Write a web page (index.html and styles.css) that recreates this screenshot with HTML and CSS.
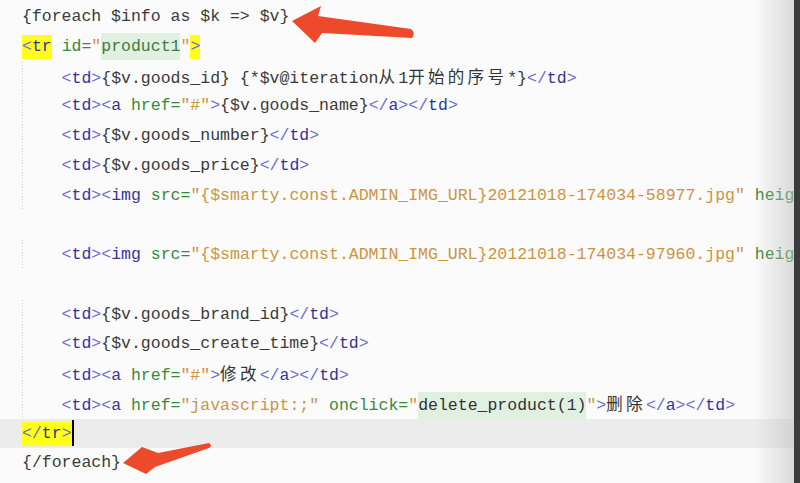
FILE: index.html
```
<!DOCTYPE html>
<html lang="zh-CN">
<head>
    <meta charset="UTF-8">
    <meta name="viewport" content="width=device-width, initial-scale=1.0">
    <title>foreach</title>
    <link rel="stylesheet" href="styles.css">
</head>
<body>
    <div class="editor">
        <div class="code">
            <div class="line">{foreach $info as $k =&gt; $v}</div>
            <div class="line"><span class="hl-y"><span class="br">&lt;</span><span class="tn">tr</span></span> <span class="at">id=</span><span class="st">"</span><span class="hl-g at">product1</span><span class="st">"</span><span class="hl-y br">&gt;</span></div>
            <div class="line ind">    <span class="br">&lt;</span><span class="tn">td</span><span class="br">&gt;</span>{$v.goods_id} {*$v@iteration<span class="zh">从</span>1<span class="zh">开始的序号</span>*}<span class="br">&lt;/</span><span class="tn">td</span><span class="br">&gt;</span></div>
            <div class="line ind">    <span class="br">&lt;</span><span class="tn">td</span><span class="br">&gt;&lt;</span><span class="tn">a</span> <span class="at">href=</span><span class="st">"#"</span><span class="br">&gt;</span>{$v.goods_name}<span class="br">&lt;/</span><span class="tn">a</span><span class="br">&gt;&lt;/</span><span class="tn">td</span><span class="br">&gt;</span></div>
            <div class="line ind">    <span class="br">&lt;</span><span class="tn">td</span><span class="br">&gt;</span>{$v.goods_number}<span class="br">&lt;/</span><span class="tn">td</span><span class="br">&gt;</span></div>
            <div class="line ind">    <span class="br">&lt;</span><span class="tn">td</span><span class="br">&gt;</span>{$v.goods_price}<span class="br">&lt;/</span><span class="tn">td</span><span class="br">&gt;</span></div>
            <div class="line ind">    <span class="br">&lt;</span><span class="tn">td</span><span class="br">&gt;&lt;</span><span class="tn">img</span> <span class="at">src=</span><span class="st">"{$smarty.const.ADMIN_IMG_URL}20121018-174034-58977.jpg"</span> <span class="at">height=</span><span class="st">"60"</span><span class="br">/&gt;</span></div>
            <div class="line"> </div>
            <div class="line ind">    <span class="br">&lt;</span><span class="tn">td</span><span class="br">&gt;&lt;</span><span class="tn">img</span> <span class="at">src=</span><span class="st">"{$smarty.const.ADMIN_IMG_URL}20121018-174034-97960.jpg"</span> <span class="at">height=</span><span class="st">"60"</span><span class="br">/&gt;</span></div>
            <div class="line"> </div>
            <div class="line ind">    <span class="br">&lt;</span><span class="tn">td</span><span class="br">&gt;</span>{$v.goods_brand_id}<span class="br">&lt;/</span><span class="tn">td</span><span class="br">&gt;</span></div>
            <div class="line ind">    <span class="br">&lt;</span><span class="tn">td</span><span class="br">&gt;</span>{$v.goods_create_time}<span class="br">&lt;/</span><span class="tn">td</span><span class="br">&gt;</span></div>
            <div class="line ind">    <span class="br">&lt;</span><span class="tn">td</span><span class="br">&gt;&lt;</span><span class="tn">a</span> <span class="at">href=</span><span class="st">"#"</span><span class="br">&gt;</span><span class="zh">修改</span><span class="br">&lt;/</span><span class="tn">a</span><span class="br">&gt;&lt;/</span><span class="tn">td</span><span class="br">&gt;</span></div>
            <div class="line ind">    <span class="br">&lt;</span><span class="tn">td</span><span class="br">&gt;&lt;</span><span class="tn">a</span> <span class="at">href=</span><span class="st">"javascript:;"</span> <span class="at">onclick=</span><span class="st">"</span><span class="hl-g">delete_product(1)</span><span class="st">"</span><span class="br">&gt;</span><span class="zh">删除</span><span class="br">&lt;/</span><span class="tn">a</span><span class="br">&gt;&lt;/</span><span class="tn">td</span><span class="br">&gt;</span></div>
            <div class="line current"><span class="hl-y"><span class="br">&lt;/</span><span class="tn">tr</span><span class="br">&gt;</span></span><span class="caret"></span></div>
            <div class="line">{/foreach}</div>

            <!-- sombra da borda direita -->
            <div class="edge-shade"></div>
        </div>
        <div class="side"></div>

        <!-- setas vermelhas da anotação -->
        <svg class="arrows" width="800" height="483" viewBox="0 0 800 483">
            <path d="M292 21 L321 6 L318 16 L411 29 Q416 33 412 38 L322 33 L315 43 Z" fill="#ec4a2a"/>
            <path d="M123 463 L142 447 L158 453 L209 443 Q213 446 209 448 L155 467 L146 474 Z" fill="#ec4a2a"/>
        </svg>
    </div>
</body>
</html>
```

FILE: styles.css
```
body {
    margin: 0;
    padding: 0;
    background-color: #fbfbfb;
}
.editor {
    position: relative;
    display: flex;
    width: 800px;
    height: 483px;
    overflow: hidden;
}
.code {
    position: relative;
    flex: 1;
    padding-top: 2px;
    overflow: hidden;
    font-family: "Liberation Mono", "Noto Sans CJK SC", monospace;
    font-size: 16.5px;
    color: #3a3a3a;
}
.line {
    height: 29.75px;
    line-height: 29.75px;
    padding-left: 22px;
    white-space: pre;
}
/* guia de indentação */
.line.ind {
    background: repeating-linear-gradient(to bottom, #cfcfcf 0 1px, transparent 1px 3px) 22px 0 / 1px 100% no-repeat;
}
.line.current {
    background-color: #ececec;
}
.br {
    color: #6c6cd2;
}
.tn {
    color: #33339e;
}
.at {
    color: #37893c;
}
.st {
    color: #cc9442;
}
.zh {
    font-family: "Noto Sans CJK SC", sans-serif;
    letter-spacing: 3.3px;
    color: #333;
}
.hl-y {
    display: inline-block;
    height: 24px;
    line-height: 24px;
    background-color: #ffff1a;
}
.hl-g {
    display: inline-block;
    height: 27px;
    line-height: 27px;
    background-color: #e1f1e1;
    color: #333;
}
.hl-g.at {
    color: #3e7c42;
}
.caret {
    display: inline-block;
    width: 2px;
    height: 26px;
    vertical-align: middle;
    background-color: #000;
}
.edge-shade {
    position: absolute;
    top: 0;
    right: 0;
    width: 40px;
    height: 100%;
    background: linear-gradient(to right, rgba(200, 200, 200, 0), rgba(190, 190, 190, 0.55));
    pointer-events: none;
}
.side {
    width: 6px;
    background-color: #3b3b3b;
}
.arrows {
    position: absolute;
    top: 0;
    left: 0;
    pointer-events: none;
}
```
